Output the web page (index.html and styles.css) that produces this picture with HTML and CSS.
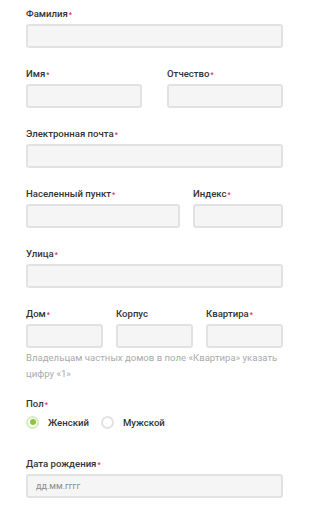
FILE: index.html
```html
<!DOCTYPE html>
<html>

<head>
	<title>Анкета</title>
	<link rel="stylesheet" href="styles.css">
</head>

<body>
	<form class="form">
		<div class="field">
			<label class="lbl">Фамилия<span class="req">*</span></label>
			<input type="text" class="inp">
		</div>

		<div class="row two">
			<div class="field">
				<label class="lbl">Имя<span class="req">*</span></label>
				<input type="text" class="inp">
			</div>
			<div class="field">
				<label class="lbl">Отчество<span class="req">*</span></label>
				<input type="text" class="inp">
			</div>
		</div>

		<div class="field">
			<label class="lbl">Электронная почта<span class="req">*</span></label>
			<input type="text" class="inp">
		</div>

		<div class="row city">
			<div class="field">
				<label class="lbl">Населенный пункт<span class="req">*</span></label>
				<input type="text" class="inp">
			</div>
			<div class="field">
				<label class="lbl">Индекс<span class="req">*</span></label>
				<input type="text" class="inp">
			</div>
		</div>

		<div class="field">
			<label class="lbl">Улица<span class="req">*</span></label>
			<input type="text" class="inp">
		</div>

		<div class="row three">
			<div class="field">
				<label class="lbl">Дом<span class="req">*</span></label>
				<input type="text" class="inp">
			</div>
			<div class="field">
				<label class="lbl">Корпус</label>
				<input type="text" class="inp">
			</div>
			<div class="field">
				<label class="lbl">Квартира<span class="req">*</span></label>
				<input type="text" class="inp">
			</div>
		</div>
		<p class="hint">Владельцам частных домов в поле «Квартира» указать цифру «1»</p>

		<div class="field sex">
			<label class="lbl">Пол<span class="req">*</span></label>
			<div class="radios">
				<span class="radio"><span class="dot checked"></span>Женский</span>
				<span class="radio"><span class="dot"></span>Мужской</span>
			</div>
		</div>

		<div class="field">
			<label class="lbl">Дата рождения<span class="req">*</span></label>
			<input type="text" class="inp" placeholder="дд.мм.гггг">
		</div>
	</form>
</body>

</html>
```

FILE: styles.css
```css
body {
	margin: 0;
	padding: 0;
	background-color: #ffffff;
	font-family: Roboto, "Liberation Sans", Arial, sans-serif;
}

.form {
	width: 257px;
	padding: 7px 0 0 26px;
}

.field {
	display: flex;
	flex-direction: column;
	margin-bottom: 19px;
}

.row {
	display: grid;
	gap: 25px;
}

.row.two {
	grid-template-columns: 1fr 1fr;
}

.row.city {
	grid-template-columns: 154px 1fr;
	gap: 13px;
}

.row.three {
	grid-template-columns: 1fr 1fr 1fr;
	gap: 13px;
}

.row.three .field {
	margin-bottom: 0;
}

.lbl {
	display: block;
	height: 14px;
	font-size: 9.6px;
	line-height: 14px;
	font-weight: 500;
	color: #333333;
	margin-bottom: 3px;
	white-space: nowrap;
}

.req {
	color: #e5196b;
	font-size: 7px;
	line-height: 0;
	vertical-align: 0;
	margin-left: 1px;
}

.inp {
	box-sizing: border-box;
	width: 100%;
	height: 24px;
	margin: 0;
	padding: 0 8px;
	background-color: #f5f5f5;
	border: 2px solid #e2e2e2;
	border-radius: 3px;
	font-family: Roboto, "Liberation Sans", Arial, sans-serif;
	font-size: 9px;
	color: #333;
	outline: none;
}

.inp::placeholder {
	color: #8a8a8a;
}

.hint {
	margin: 2px 0 15px 0;
	font-size: 9.6px;
	line-height: 16px;
	font-weight: 400;
	color: #aaaaaa;
}

.sex {
	margin-bottom: 27px;
}

.radios {
	display: flex;
	align-items: center;
	height: 16px;
}

.radio {
	display: flex;
	align-items: center;
	font-size: 9.6px;
	font-weight: 500;
	color: #333333;
	margin-right: 12px;
}

.dot {
	box-sizing: border-box;
	width: 13px;
	height: 13px;
	border-radius: 50%;
	border: 2px solid #e2e2e2;
	background-color: #ffffff;
	margin: 0 9px 0 0;
	display: inline-flex;
	align-items: center;
	justify-content: center;
}

.dot.checked {
	border-color: #d6ecc2;
}

.dot.checked::after {
	content: "";
	width: 6px;
	height: 6px;
	border-radius: 50%;
	background-color: #8cc63f;
}
```
